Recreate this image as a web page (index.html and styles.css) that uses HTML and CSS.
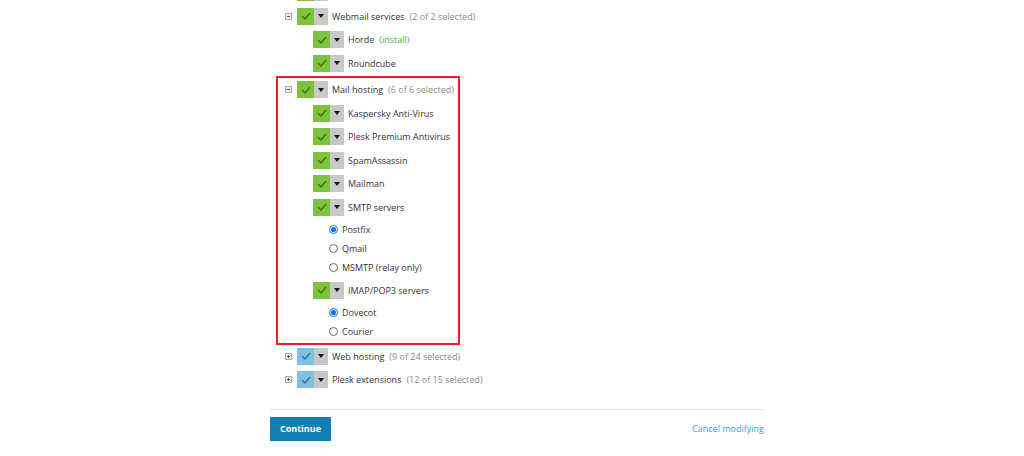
FILE: index.html
```html
<!DOCTYPE html>
<html>
<head>
<meta charset="utf-8">
<link rel="stylesheet" href="styles.css">
</head>
<body>
<div class="page">
  <div class="tree">
    <div class="row lvl1 ghost">
      <span class="tog none"></span>
      <span class="cb green"><span class="ck"><svg width="10" height="8" viewBox="0 0 10 8"><path d="M1 4 L4 7 L9 1" fill="none" stroke="#3d6e1d" stroke-width="1.4"/></svg></span><span class="dd"><svg width="6" height="4" viewBox="0 0 6 4"><path d="M0 0 H6 L3 4 Z" fill="#111"/></svg></span></span>
    </div>
    <div class="row lvl1">
      <span class="tog"><svg width="7" height="7" viewBox="0 0 7 7"><rect x="0.5" y="0.5" width="6" height="6" fill="#eee" stroke="#aaa"/><path d="M2 3.5 H5" stroke="#555"/></svg></span>
      <span class="cb green"><span class="ck"><svg width="10" height="8" viewBox="0 0 10 8"><path d="M1 4 L4 7 L9 1" fill="none" stroke="#3d6e1d" stroke-width="1.4"/></svg></span><span class="dd"><svg width="6" height="4" viewBox="0 0 6 4"><path d="M0 0 H6 L3 4 Z" fill="#111"/></svg></span></span>
      <span class="lbl">Webmail services</span><span class="cnt">(2 of 2 selected)</span>
    </div>
    <div class="row lvl2">
      <span class="cb green"><span class="ck"><svg width="10" height="8" viewBox="0 0 10 8"><path d="M1 4 L4 7 L9 1" fill="none" stroke="#3d6e1d" stroke-width="1.4"/></svg></span><span class="dd"><svg width="6" height="4" viewBox="0 0 6 4"><path d="M0 0 H6 L3 4 Z" fill="#111"/></svg></span></span>
      <span class="lbl">Horde</span><span class="inst">(install)</span>
    </div>
    <div class="row lvl2">
      <span class="cb green"><span class="ck"><svg width="10" height="8" viewBox="0 0 10 8"><path d="M1 4 L4 7 L9 1" fill="none" stroke="#3d6e1d" stroke-width="1.4"/></svg></span><span class="dd"><svg width="6" height="4" viewBox="0 0 6 4"><path d="M0 0 H6 L3 4 Z" fill="#111"/></svg></span></span>
      <span class="lbl">Roundcube</span>
    </div>

    <div class="hl">
      <div class="row lvl1">
        <span class="tog"><svg width="7" height="7" viewBox="0 0 7 7"><rect x="0.5" y="0.5" width="6" height="6" fill="#eee" stroke="#aaa"/><path d="M2 3.5 H5" stroke="#555"/></svg></span>
        <span class="cb green"><span class="ck"><svg width="10" height="8" viewBox="0 0 10 8"><path d="M1 4 L4 7 L9 1" fill="none" stroke="#3d6e1d" stroke-width="1.4"/></svg></span><span class="dd"><svg width="6" height="4" viewBox="0 0 6 4"><path d="M0 0 H6 L3 4 Z" fill="#111"/></svg></span></span>
        <span class="lbl">Mail hosting</span><span class="cnt">(6 of 6 selected)</span>
      </div>
      <div class="row lvl2">
        <span class="cb green"><span class="ck"><svg width="10" height="8" viewBox="0 0 10 8"><path d="M1 4 L4 7 L9 1" fill="none" stroke="#3d6e1d" stroke-width="1.4"/></svg></span><span class="dd"><svg width="6" height="4" viewBox="0 0 6 4"><path d="M0 0 H6 L3 4 Z" fill="#111"/></svg></span></span>
        <span class="lbl">Kaspersky Anti-Virus</span>
      </div>
      <div class="row lvl2">
        <span class="cb green"><span class="ck"><svg width="10" height="8" viewBox="0 0 10 8"><path d="M1 4 L4 7 L9 1" fill="none" stroke="#3d6e1d" stroke-width="1.4"/></svg></span><span class="dd"><svg width="6" height="4" viewBox="0 0 6 4"><path d="M0 0 H6 L3 4 Z" fill="#111"/></svg></span></span>
        <span class="lbl">Plesk Premium Antivirus</span>
      </div>
      <div class="row lvl2">
        <span class="cb green"><span class="ck"><svg width="10" height="8" viewBox="0 0 10 8"><path d="M1 4 L4 7 L9 1" fill="none" stroke="#3d6e1d" stroke-width="1.4"/></svg></span><span class="dd"><svg width="6" height="4" viewBox="0 0 6 4"><path d="M0 0 H6 L3 4 Z" fill="#111"/></svg></span></span>
        <span class="lbl">SpamAssassin</span>
      </div>
      <div class="row lvl2">
        <span class="cb green"><span class="ck"><svg width="10" height="8" viewBox="0 0 10 8"><path d="M1 4 L4 7 L9 1" fill="none" stroke="#3d6e1d" stroke-width="1.4"/></svg></span><span class="dd"><svg width="6" height="4" viewBox="0 0 6 4"><path d="M0 0 H6 L3 4 Z" fill="#111"/></svg></span></span>
        <span class="lbl">Mailman</span>
      </div>
      <div class="row lvl2">
        <span class="cb green"><span class="ck"><svg width="10" height="8" viewBox="0 0 10 8"><path d="M1 4 L4 7 L9 1" fill="none" stroke="#3d6e1d" stroke-width="1.4"/></svg></span><span class="dd"><svg width="6" height="4" viewBox="0 0 6 4"><path d="M0 0 H6 L3 4 Z" fill="#111"/></svg></span></span>
        <span class="lbl">SMTP servers</span>
      </div>
      <div class="radios">
        <div class="rrow"><svg class="rd" width="9" height="9" viewBox="0 0 9 9"><circle cx="4.5" cy="4.5" r="4" fill="#fff" stroke="#1a73e8"/><circle cx="4.5" cy="4.5" r="2.6" fill="#1a73e8"/></svg><span class="lbl">Postfix</span></div>
        <div class="rrow"><svg class="rd" width="9" height="9" viewBox="0 0 9 9"><circle cx="4.5" cy="4.5" r="4" fill="#fff" stroke="#666"/></svg><span class="lbl">Qmail</span></div>
        <div class="rrow"><svg class="rd" width="9" height="9" viewBox="0 0 9 9"><circle cx="4.5" cy="4.5" r="4" fill="#fff" stroke="#666"/></svg><span class="lbl">MSMTP (relay only)</span></div>
      </div>
      <div class="row lvl2">
        <span class="cb green"><span class="ck"><svg width="10" height="8" viewBox="0 0 10 8"><path d="M1 4 L4 7 L9 1" fill="none" stroke="#3d6e1d" stroke-width="1.4"/></svg></span><span class="dd"><svg width="6" height="4" viewBox="0 0 6 4"><path d="M0 0 H6 L3 4 Z" fill="#111"/></svg></span></span>
        <span class="lbl">IMAP/POP3 servers</span>
      </div>
      <div class="radios">
        <div class="rrow"><svg class="rd" width="9" height="9" viewBox="0 0 9 9"><circle cx="4.5" cy="4.5" r="4" fill="#fff" stroke="#1a73e8"/><circle cx="4.5" cy="4.5" r="2.6" fill="#1a73e8"/></svg><span class="lbl">Dovecot</span></div>
        <div class="rrow"><svg class="rd" width="9" height="9" viewBox="0 0 9 9"><circle cx="4.5" cy="4.5" r="4" fill="#fff" stroke="#666"/></svg><span class="lbl">Courier</span></div>
      </div>
    </div>

    <div class="row lvl1">
      <span class="tog"><svg width="7" height="7" viewBox="0 0 7 7"><rect x="0.5" y="0.5" width="6" height="6" fill="#eee" stroke="#aaa"/><path d="M2 3.5 H5 M3.5 2 V5" stroke="#555"/></svg></span>
      <span class="cb blue"><span class="ck"><svg width="10" height="8" viewBox="0 0 10 8"><path d="M1 4 L4 7 L9 1" fill="none" stroke="#2a73a8" stroke-width="1.4"/></svg></span><span class="dd"><svg width="6" height="4" viewBox="0 0 6 4"><path d="M0 0 H6 L3 4 Z" fill="#111"/></svg></span></span>
      <span class="lbl">Web hosting</span><span class="cnt">(9 of 24 selected)</span>
    </div>
    <div class="row lvl1">
      <span class="tog"><svg width="7" height="7" viewBox="0 0 7 7"><rect x="0.5" y="0.5" width="6" height="6" fill="#eee" stroke="#aaa"/><path d="M2 3.5 H5 M3.5 2 V5" stroke="#555"/></svg></span>
      <span class="cb blue"><span class="ck"><svg width="10" height="8" viewBox="0 0 10 8"><path d="M1 4 L4 7 L9 1" fill="none" stroke="#2a73a8" stroke-width="1.4"/></svg></span><span class="dd"><svg width="6" height="4" viewBox="0 0 6 4"><path d="M0 0 H6 L3 4 Z" fill="#111"/></svg></span></span>
      <span class="lbl">Plesk extensions</span><span class="cnt">(12 of 15 selected)</span>
    </div>
  </div>

  <div class="footer">
    <button class="btn">Continue</button>
    <a class="cancel" href="#">Cancel modifying</a>
  </div>
</div>
</body>
</html>
```

FILE: styles.css
```css
html, body {
  margin: 0;
  padding: 0;
  background: #fff;
}
body {
  font-family: "Open Sans", "Liberation Sans", sans-serif;
  font-size: 9px;
  color: #333;
}
.page {
  margin-left: 270px;
  width: 494px;
}
.tree {
  display: flex;
  flex-direction: column;
  margin-top: -19.25px;
}
.row {
  height: 23.5px;
  display: flex;
  align-items: center;
}
.row.lvl1 { padding-left: 15px; }
.row.lvl2 { padding-left: 43px; }
.tog {
  width: 7px;
  height: 7px;
  margin-right: 5px;
  display: flex;
}
.tog.none { visibility: hidden; }
.cb {
  display: flex;
  height: 17px;
  width: 31px;
  margin-right: 4px;
}
.cb .ck {
  width: 17px;
  display: flex;
  align-items: center;
  justify-content: center;
}
.cb .dd {
  width: 14px;
  background: #c8c8c8;
  display: flex;
  align-items: center;
  justify-content: center;
}
.cb.green .ck { background: #7bc33d; }
.cb.blue .ck { background: #7dc0e1; }
.lbl { color: #333; white-space: nowrap; }
.cnt { color: #8a8a8a; margin-left: 5px; white-space: nowrap; }
.inst { color: #4cae4c; margin-left: 5px; }
.hl {
  margin: 1.25px 0 0 6px;
  border: 2px solid #ee1c24;
  width: 184px;
  box-sizing: border-box;
  display: flex;
  flex-direction: column;
}
.hl .row.lvl1 { padding-left: 7px; }
.hl .row.lvl2 { padding-left: 35px; }
.radios {
  padding: 1.25px 0;
  display: flex;
  flex-direction: column;
}
.rrow {
  height: 19px;
  display: flex;
  align-items: center;
  padding-left: 51px;
}
.rd { margin-right: 4px; }
.footer {
  margin-top: 17px;
  border-top: 1px solid #e3e3e3;
  padding-top: 7px;
  display: flex;
  align-items: center;
  justify-content: space-between;
}
.btn {
  background: #117fb3;
  color: #fff;
  border: 0;
  height: 24px;
  width: 61px;
  padding: 0;
  font-family: "Open Sans", "Liberation Sans", sans-serif;
  font-size: 9px;
  font-weight: bold;
}
.cancel {
  color: #3d9be0;
  text-decoration: none;
  font-size: 9px;
}
```
